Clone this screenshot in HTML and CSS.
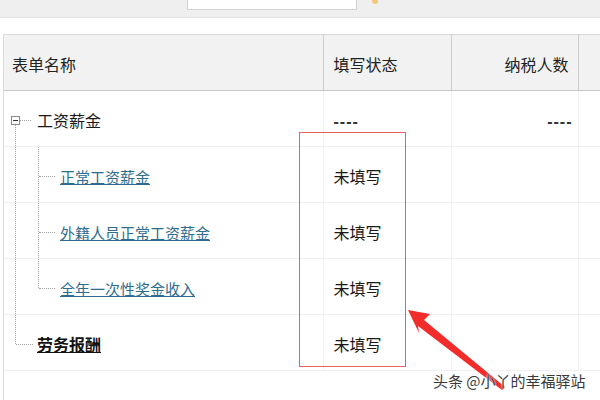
FILE: index.html
```html
<!DOCTYPE html>
<html lang="zh-CN">
<head>
  <meta charset="UTF-8">
  <meta name="viewport" content="width=device-width, initial-scale=1.0">
  <title>表单列表</title>
  <link rel="stylesheet" href="styles.css">
</head>
<body>
  <div class="toolbar">
    <div class="search-box"></div>
    <span class="search-icon"></span>
  </div>

  <div class="grid">
    <table>
      <colgroup>
        <col class="c-name">
        <col class="c-status">
        <col class="c-count">
        <col class="c-rest">
      </colgroup>
      <thead>
        <tr>
          <th>表单名称</th>
          <th>填写状态</th>
          <th class="num">纳税人数</th>
          <th></th>
        </tr>
      </thead>
      <tbody>
        <tr>
          <td class="tree root">
            <span class="toggle"></span>
            <span class="hline"></span>
            <span class="vline outer lower"></span>
            工资薪金
          </td>
          <td><span class="empty">----</span></td>
          <td class="num"><span class="empty">----</span></td>
          <td></td>
        </tr>
        <tr>
          <td class="tree child">
            <span class="vline outer"></span>
            <span class="vline inner"></span>
            <span class="hline"></span>
            <a href="#">正常工资薪金</a>
          </td>
          <td>未填写</td>
          <td></td>
          <td></td>
        </tr>
        <tr>
          <td class="tree child">
            <span class="vline outer"></span>
            <span class="vline inner"></span>
            <span class="hline"></span>
            <a href="#">外籍人员正常工资薪金</a>
          </td>
          <td>未填写</td>
          <td></td>
          <td></td>
        </tr>
        <tr>
          <td class="tree child">
            <span class="vline outer"></span>
            <span class="vline inner upper"></span>
            <span class="hline"></span>
            <a href="#">全年一次性奖金收入</a>
          </td>
          <td>未填写</td>
          <td></td>
          <td></td>
        </tr>
        <tr>
          <td class="tree last">
            <span class="vline outer upper"></span>
            <span class="hline"></span>
            <a href="#" class="current">劳务报酬</a>
          </td>
          <td>未填写</td>
          <td></td>
          <td></td>
        </tr>
      </tbody>
    </table>
  </div>

  <!-- annotation overlay -->
  <div class="highlight"></div>
  <svg class="arrow" width="600" height="400" viewBox="0 0 600 400">
    <polygon points="408,310 430,314 424,320 505,387 502,390 418,326 419,333" fill="#f22b2b"/>
  </svg>
  <div class="watermark">头条 @小丫的幸福驿站</div>
</body>
</html>
```

FILE: styles.css
```css
body { margin: 0; width: 600px; height: 400px; overflow: hidden; position: relative; background: #fff; font-family: "Noto Sans CJK SC", "Noto Sans", sans-serif; color: #1a1a1a; }

.toolbar { height: 18px; background: #efefef; border-bottom: 1px solid #e4e4e4; display: flex; align-items: flex-start; padding-left: 187px; box-sizing: border-box; }
.search-box { width: 170px; height: 10px; background: #fff; border: 1px solid #d2d2d2; border-top: 0; box-sizing: border-box; }
.search-icon { width: 6px; height: 4px; margin-left: 15px; background: #f6c77a; border-radius: 0 0 3px 3px; }

.grid { margin: 16px 0 0 3px; height: 366px; border-left: 1px solid #dcdcdc; }
table { width: 597px; table-layout: fixed; border-collapse: collapse; font-size: 16px; }
.c-name { width: 319px; }
.c-status { width: 128px; }
.c-count { width: 127px; }

th { height: 53px; background: #f2f2f2; border-top: 1px solid #dadada; border-bottom: 1px solid #c6c6c6; border-right: 1px solid #cdcdcd; font-weight: normal; text-align: left; padding: 2px 0 0 8px; color: #222; }
th:nth-child(2) { padding-left: 10px; }
th.num { text-align: right; padding-right: 9px; }
th:last-child { border-right: 0; }

td { height: 52px; padding: 3px 0 0 10px; border-bottom: 1px solid #f0f0f0; border-right: 1px solid #f2f2f2; vertical-align: middle; color: #1a1a1a; }
td:last-child { border-right: 0; }
td.num { text-align: right; padding-right: 5px; }
.empty { font-family: "Liberation Sans", sans-serif; font-weight: bold; letter-spacing: 1px; color: #333; }

.tree { position: relative; padding-left: 33px; }
.tree.child { padding-left: 56px; font-size: 15px; }
.tree a { color: #2f6d8e; text-decoration: underline; }
.tree a.current { color: #111; font-weight: bold; }

.toggle { position: absolute; left: 7px; top: calc(50% - 3px); width: 9px; height: 9px; border: 1px solid #8a8a8a; background: #fff; box-sizing: border-box; }
.toggle::after { content: ""; position: absolute; left: 1px; right: 1px; top: 3px; border-top: 1px solid #333; }

.vline { position: absolute; top: 0; bottom: 0; border-left: 1px dotted #a4a4a4; }
.vline.outer { left: 11px; }
.vline.inner { left: 34px; }
.vline.lower { top: calc(50% + 6px); }
.vline.upper { bottom: calc(50% - 1.5px); }

.hline { position: absolute; top: calc(50% + 1.5px); border-top: 1px dotted #a4a4a4; }
.root .hline { left: 16px; width: 11px; }
.child .hline { left: 35px; width: 16px; }
.last .hline { left: 12px; width: 17px; }

.highlight { position: absolute; left: 299px; top: 132px; width: 107px; height: 235px; border: 1px solid #e36262; box-sizing: border-box; }
.arrow { position: absolute; left: 0; top: 0; }
.watermark { position: absolute; left: 433px; top: 370px; font-size: 15px; color: #3a3a3a; text-shadow: 0 0 2px #fff, 0 0 2px #fff; white-space: nowrap; }
```
